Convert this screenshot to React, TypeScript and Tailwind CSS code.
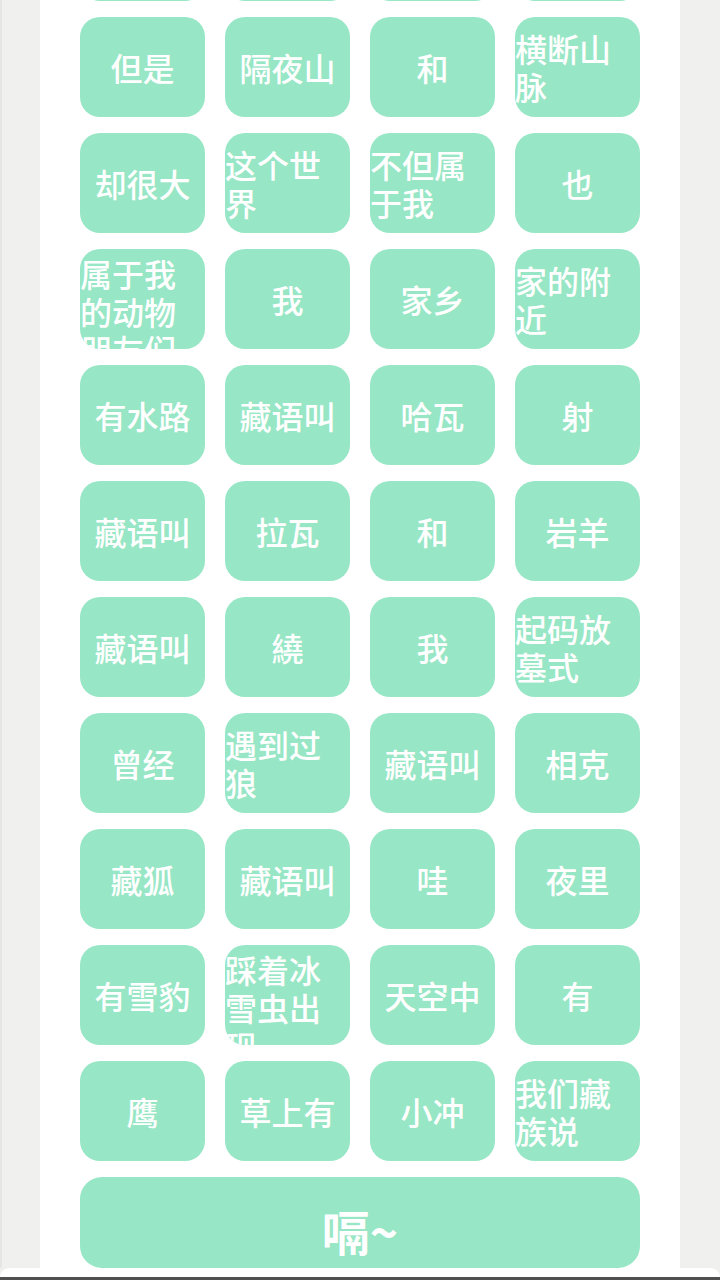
import React from 'react';

const words: string[] = [
  '', '', '', '',
  '但是', '隔夜山', '和', '横断山脉',
  '却很大', '这个世界', '不但属于我', '也',
  '属于我的动物朋友们', '我', '家乡', '家的附近',
  '有水路', '藏语叫', '哈瓦', '射',
  '藏语叫', '拉瓦', '和', '岩羊',
  '藏语叫', '繞', '我', '起码放墓式',
  '曾经', '遇到过狼', '藏语叫', '相克',
  '藏狐', '藏语叫', '哇', '夜里',
  '有雪豹', '踩着冰雪虫出现', '天空中', '有',
  '鹰', '草上有', '小冲', '我们藏族说',
];

const WordKey: React.FC<{ text: string }> = ({ text }) => {
  // more than two lines doesn't fit: it sits at the top and gets clipped
  const tooLong = text.length > 6;
  return (
    <button
      className={`h-[100px] w-full rounded-[20px] bg-[#97e6c5] overflow-hidden flex justify-center ${
        tooLong ? 'items-start pt-[5px]' : 'items-center'
      }`}
    >
      <span className="block text-left text-white text-[32px] leading-[38px] font-medium">{text}</span>
    </button>
  );
};

export default function App() {
  return (
    <div
      className="w-[720px] h-[1280px] flex flex-col overflow-hidden bg-[#f0f1ef]"
      style={{ fontFamily: '"Noto Sans CJK SC", "Noto Sans", sans-serif' }}
    >
      <div className="flex-1 flex min-h-0">
        <div className="w-[2px] bg-[#e6e7e5]" />
        <div className="w-[38px]" />
        <main className="flex-1 bg-white overflow-hidden px-[40px]">
          <div className="grid grid-cols-4 gap-x-[20px] gap-y-[16px] -mt-[99px]">
            {words.map((w, i) => (
              <WordKey key={i} text={w} />
            ))}
          </div>
          <button className="mt-[16px] w-full h-[91px] rounded-[22px] bg-[#97e6c5] flex items-center justify-center">
            <span className="text-white text-[48px] font-bold leading-none pt-[14px]">嗝~</span>
          </button>
        </main>
        <div className="w-[40px]" />
      </div>
      <div className="h-[9px] bg-white rounded-t-[14px]" />
      <div className="h-[3px] bg-[#505050]" />
    </div>
  );
}
